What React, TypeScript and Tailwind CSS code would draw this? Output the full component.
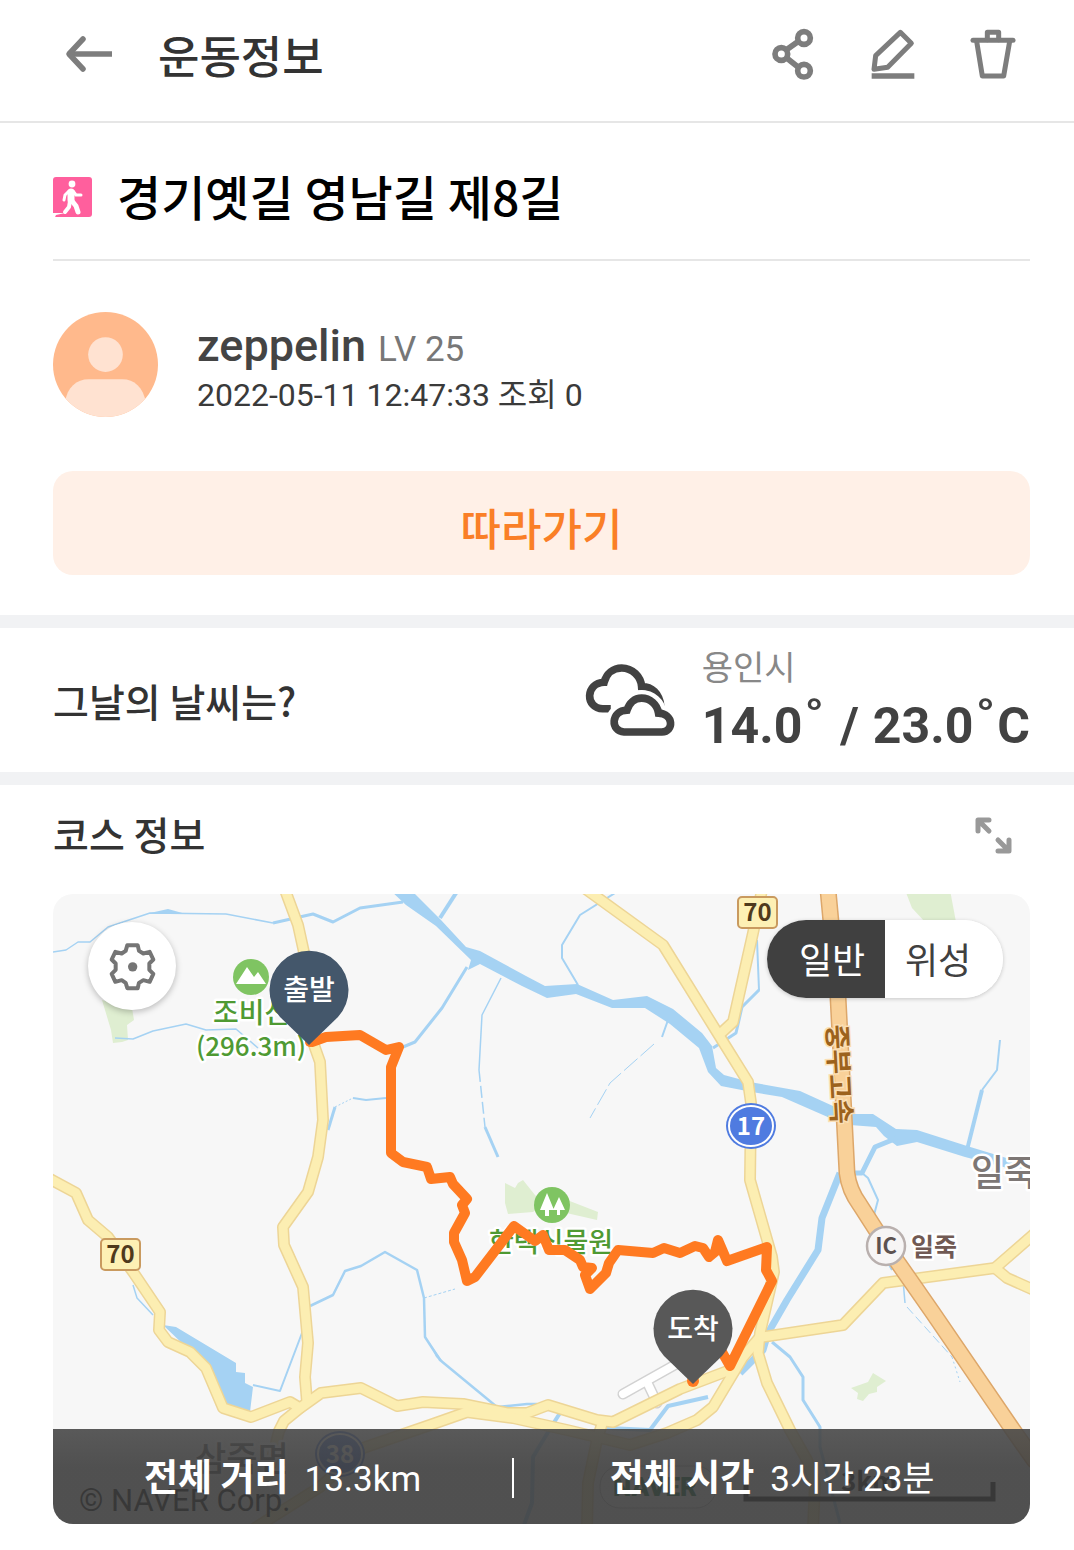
import { useState } from "react";

const YELLOW_ROADS = [
  "M285 890L298 925L305 957L314 1045L320 1062L323 1120L318 1157L308 1192L283 1227L284 1245L303 1287L308 1343L305 1377L307 1402",
  "M50 1179L76 1193L88 1220L108 1237L133 1272L160 1312L159 1330L168 1342L190 1352L206 1368L223 1408L251 1417L290 1402L300 1408",
  "M268 1475L279 1431L284 1421L300 1408L321 1393L361 1388L397 1406L423 1402L463 1404L507 1413L527 1413L548 1405L597 1420L613 1422L680 1389L730 1370",
  "M255 1528L320 1487L363 1448L430 1425L467 1412L513 1418L567 1430L630 1445L667 1433L697 1420L713 1407L743 1357L760 1337",
  "M587 890L663 945L720 1037L748 1082L751 1103L750 1180L772 1257L774 1272L760 1333L758 1353L767 1383L790 1430L807 1460L815 1483L813 1528",
  "M762 890L753 933L733 1022L720 1034",
  "M762 1337L843 1325L883 1283L995 1268L1034 1234",
  "M995 1268L1007 1278L1034 1290",
  "M602 1424L597 1440L588 1483L587 1528",
];

const HIGHWAY = "M828 890L838 997L847 1173Q849 1190 860 1205L887 1247L933 1313L1013 1430L1034 1460";

const STREAMS: { d: string; w: number; dash?: string }[] = [
  { d: "M53 952L66 950L78 942L90 942L108 927L150 913L226 914L273 923", w: 1.5 },
  { d: "M273 923L313 914L333 922L360 908L403 902", w: 3 },
  { d: "M115 1038L133 1039L153 1031L186 1024L206 1030L236 1029L258 1048", w: 1.5 },
  { d: "M328 1130L335 1107", w: 3 },
  { d: "M335 1107L353 1098", w: 1, dash: "2 2" },
  { d: "M353 1098L366 1100L386 1098", w: 2 },
  { d: "M458 890L440 918", w: 4 },
  { d: "M467 967L442 1008L415 1042L403 1047", w: 3 },
  { d: "M501 978L482 1015L479 1070", w: 1.5 },
  { d: "M479 1070L485 1127", w: 1.5, dash: "12 4" },
  { d: "M485 1127L498 1157", w: 3 },
  { d: "M615 893L580 915L562 945L562 958L578 985", w: 2 },
  { d: "M668 1020L662 1037", w: 2 },
  { d: "M654 1044L610 1083L590 1118", w: 1, dash: "18 4" },
  { d: "M757 940L759 990L742 1007", w: 2 },
  { d: "M759 990L742 1007L736 1033L713 1048", w: 3 },
  { d: "M1000 1040L997 1070L982 1090", w: 2 },
  { d: "M982 1090L967 1150", w: 4 },
  { d: "M897 1138L875 1147L862 1173L840 1173", w: 5 },
  { d: "M840 1173L822 1218L818 1250L787 1300L768 1333L763 1350L740 1373", w: 7 },
  { d: "M862 1173L868 1178L878 1200L870 1230L892 1270", w: 2 },
  { d: "M903 1280L905 1303", w: 1.5 },
  { d: "M907 1307L952 1357", w: 1, dash: "9 4" },
  { d: "M952 1357L960 1382", w: 1, dash: "2 3" },
  { d: "M772 1342L790 1357L803 1377L803 1400L820 1427L820 1447L840 1523", w: 3 },
  { d: "M133 1285L137 1298L153 1315", w: 1.5 },
  { d: "M253 1385L280 1391L302 1333", w: 2 },
  { d: "M310 1306L333 1295L345 1271L361 1266L385 1252L417 1270L424 1298L425 1337L440 1360L497 1407L527 1404L537 1404", w: 2.5 },
  { d: "M424 1298L455 1289", w: 1, dash: "3 2" },
  { d: "M560 1413L553 1424L533 1457L532 1503L524 1525", w: 4 },
  { d: "M708 1397L668 1406L650 1430L608 1428L587 1420", w: 4 },
];

const RIVER =
  "M390 890L411 890L441 920L466 947L480 951L526 976L545 986L577 984L613 1000L647 996L673 1009L702 1033L712 1046L716 1068L724 1075L750 1082L800 1091L833 1106L852 1114L873 1114L896 1129L917 1130L967 1146L1030 1165L1030 1174L965 1157L917 1142L897 1146L884 1136L876 1127L850 1125L830 1118L782 1097L752 1092L721 1086L708 1072L699 1048L670 1024L645 1008L612 1008L576 994L547 998L522 986L480 964L468 970L471 960L436 926L406 905Z";

const ROUTE =
  "M312 1042L326 1037L360 1035L386 1050L399 1047L391 1067L391 1153L403 1162L427 1167L431 1179L450 1177L453 1184L467 1199L462 1205L465 1213L454 1233L454 1242L462 1260L467 1281L475 1277L514 1226L535 1241L543 1235L549 1250L565 1250L580 1260L583 1267L592 1268L585 1275L590 1289L606 1273L609 1263L618 1250L653 1253L664 1248L680 1253L695 1246L703 1248L709 1257L715 1252L718 1240L727 1261L767 1247L766 1270L772 1281L730 1366L718 1345";

function RouteShield({ x, y }: { x: number; y: number }) {
  return (
    <g>
      <rect x={x} y={y} width="39" height="31" rx="4" fill="#fdf0b4" stroke="#c99a5f" strokeWidth="2" />
      <text x={x + 19.5} y={y + 24} textAnchor="middle" fontSize="24" fontWeight="700" fill="#4f3a1c">70</text>
    </g>
  );
}

function RoundShield({ x, y, label }: { x: number; y: number; label: string }) {
  return (
    <g>
      <ellipse cx={x} cy={y} rx="25" ry="23" fill="#4f7be0" />
      <ellipse cx={x} cy={y} rx="22" ry="20" fill="none" stroke="#fff" strokeWidth="2" />
      <text x={x} y={y + 9} textAnchor="middle" fontSize="24" fontWeight="700" fill="#fff">{label}</text>
    </g>
  );
}

function Pin({ x, y, color, label }: { x: number; y: number; color: string; label: string }) {
  return (
    <g transform={`translate(${x} ${y})`}>
      <path d="M0 55L-29 27A39.5 39.5 0 1 1 29 27Z" fill={color} />
      <text y="10" textAnchor="middle" fontSize="28" fontWeight="500" fill="#fff">{label}</text>
    </g>
  );
}

function CourseMap() {
  return (
    <svg
      viewBox="53 894 977 630"
      preserveAspectRatio="xMidYMid slice"
      className="block aspect-[977/630] w-full bg-[#f7f7f7] font-['Noto_Sans_CJK_KR',sans-serif]"
      role="img"
      aria-label="코스 지도"
    >
      <g fill="#dfeed1">
        <path d="M102 1000L132 1008L134 1020L127 1025L128 1040L122 1042L113 1043L111 1030Z" />
        <path d="M505 1183L515 1188L518 1183L523 1180L535 1195L545 1204L533 1212L508 1214L505 1203Z" />
        <path d="M562 1198L598 1212L597 1220L562 1212Z" />
        <path d="M905 890H950L956 922H925L912 908Z" />
        <path d="M851 1388L868 1382L873 1373L886 1381L877 1387L877 1392L869 1394L863 1401L857 1399L858 1393Z" />
      </g>
      <g fill="#a5d2f3">
        <path d={RIVER} />
        <path d="M163 1325L176 1327L236 1363L236 1372L245 1373L245 1383L253 1387L250 1412H226L206 1367L186 1347Z" />
        <path d="M150 913L168 909L186 914Z" />
        <path d="M429 1342L444 1363L436 1357Z" />
      </g>
      <g fill="none" stroke="#a5d2f3" strokeLinejoin="round">
        {STREAMS.map((s) => (
          <path key={s.d} d={s.d} strokeWidth={s.w} strokeDasharray={s.dash} />
        ))}
      </g>
      <g fill="none" strokeLinecap="round" strokeLinejoin="round">
        <path d="M623 1394L680 1362M647 1382L657 1403" stroke="#d2d2d2" strokeWidth="11" />
        <path d="M623 1394L680 1362M647 1382L657 1403" stroke="#fff" strokeWidth="8" />
        {YELLOW_ROADS.map((d) => (
          <path key={d} d={d} stroke="#edd596" strokeWidth="12" />
        ))}
        {YELLOW_ROADS.map((d) => (
          <path key={d} d={d} stroke="#fceeb2" strokeWidth="9" />
        ))}
        <path d={HIGHWAY} stroke="#dda76a" strokeWidth="17" />
        <path d={HIGHWAY} stroke="#f9d199" strokeWidth="14" />
      </g>

      <RouteShield x={738} y={897} />
      <RouteShield x={101} y={1239} />
      <RoundShield x={751} y={1126} label="17" />
      <RoundShield x={340} y={1454} label="38" />

      <circle cx="886" cy="1246" r="19" fill="#f7f5f5" stroke="#b9b0ae" strokeWidth="2.5" />
      <text x="886" y="1254" textAnchor="middle" fontSize="22" fontWeight="700" fill="#5d5250">IC</text>

      <g stroke="#fff" strokeWidth="5" strokeLinejoin="round" className="[paint-order:stroke]">
        <text x="911" y="1256" fontSize="25" fontWeight="700" fill="#715a54">일죽</text>
        <text x="971" y="1186" fontSize="36" fontWeight="500" fill="#7d7775">일죽</text>
        <text x="213" y="1023" fontSize="28" fontWeight="500" fill="#4f9a33">조비산</text>
        <text x="251" y="1056" textAnchor="middle" fontSize="26" fontWeight="500" fill="#4f9a33">(296.3m)</text>
        <text x="551" y="1252" textAnchor="middle" fontSize="27" fontWeight="500" fill="#4f9a33">한택식물원</text>
        <text x="195" y="1471" fontSize="34" fontWeight="500" fill="#555">삼죽면</text>
      </g>
      <text
        transform="translate(827 1025) rotate(87)"
        fontSize="27"
        fontWeight="700"
        fill="#9c621c"
        stroke="#fbdfb4"
        strokeWidth="3"
        className="[paint-order:stroke]"
      >
        중부고속
      </text>

      <circle cx="251" cy="977" r="18" fill="#7fc462" />
      <path d="M236 984L247 967L254 977L258 972L266 984Z" fill="#fff" />
      <circle cx="552" cy="1205" r="18" fill="#7fc462" />
      <path d="M547 1193L554 1210H549V1216H545V1210H540ZM559 1197L565 1210H560V1215H557V1210H553Z" fill="#fff" />

      <path d={ROUTE} fill="none" stroke="#ff7a21" strokeWidth="10" strokeLinecap="round" strokeLinejoin="round" />
      <circle cx="310" cy="1042" r="5" fill="#ff7a21" />
      <circle cx="693" cy="1381" r="6" fill="#ff7a21" />
      <Pin x={309} y={990} color="#44576b" label="출발" />
      <Pin x={693} y={1329} color="#585858" label="도착" />

      <text x="79" y="1511" fontSize="31" fill="#000" className="font-[Roboto,sans-serif]">© NAVER Corp.</text>
      <rect x="600" y="1466" width="116" height="42" rx="20" fill="#fff" stroke="#bbb" />
      <text x="613" y="1496" fontSize="26" fontWeight="900" fill="#00632d" className="font-[Roboto,sans-serif]">NAVER</text>
      <path d="M746 1482V1499H993V1482" fill="none" stroke="#000" strokeWidth="5" />
      <text x="869" y="1491" textAnchor="middle" fontSize="26" fontWeight="700" fill="#000">3km</text>
    </svg>
  );
}

const iconButton = "block cursor-pointer";

export default function App() {
  const [layer, setLayer] = useState("일반");

  return (
    <div className="min-h-screen bg-white pb-6 font-['Noto_Sans_CJK_KR',sans-serif] text-[#333]">
      <header className="flex items-center border-b-2 border-[#e6e6e6] pt-[25px] pr-14 pb-9 pl-16">
        <button type="button" aria-label="뒤로" className={iconButton}>
          <svg viewBox="0 0 50 40" className="h-10 w-[50px]" fill="none" stroke="#7d7d7d" strokeWidth="5.5" strokeLinejoin="round">
            <path d="M48 19H5" />
            <path d="M19 4L5 19L19 34" strokeLinecap="round" />
          </svg>
        </button>
        <h1 className="ml-11 text-[45px] leading-[60px] font-medium">운동정보</h1>
        <div className="ml-auto flex gap-[50px]">
          <button type="button" aria-label="공유" className={iconButton}>
            <svg viewBox="85 75 150 180" className="h-[60px] w-[50px]" fill="none" stroke="#7d7d7d" strokeWidth="17">
              <circle cx="193" cy="114" r="19" />
              <circle cx="125" cy="162" r="19" />
              <circle cx="193" cy="212" r="19" />
              <path d="M141 149L176 124M141 174L176 202" />
            </svg>
          </button>
          <button type="button" aria-label="수정" className={iconButton}>
            <svg viewBox="385 75 150 180" className="h-[60px] w-[50px]" fill="none" stroke="#7d7d7d" strokeWidth="15" strokeLinejoin="round">
              <path d="M482 97L515 130L444 202L403 208L408 167Z" />
              <path d="M396 228H524" strokeWidth="17" />
            </svg>
          </button>
          <button type="button" aria-label="삭제" className={iconButton}>
            <svg viewBox="685 75 150 180" className="h-[60px] w-[50px]" fill="none" stroke="#7d7d7d" strokeWidth="15" strokeLinecap="round" strokeLinejoin="round">
              <path d="M700 121H820" />
              <path d="M711 124L728 228H792L810 124" />
              <path d="M743 119V97H777V119" />
            </svg>
          </button>
        </div>
      </header>

      <main>
        <section className="pr-11 pl-[53px]">
          <div className="flex items-center gap-6 border-b-2 border-[#e6e6e6] pt-10 pb-7">
            <svg viewBox="0 0 40 40" className="size-10" aria-label="걷기" role="img">
              <rect width="39" height="40" rx="3" fill="#ff5f9d" />
              <g fill="none" stroke="#fff" strokeLinecap="round" strokeLinejoin="round">
                <path d="M18 15L18 23" strokeWidth="7" />
                <path d="M16 14L12 18L11 23" strokeWidth="3" />
                <path d="M20 14L23 18L28 18" strokeWidth="3" />
                <path d="M17 24L16 30L12 35" strokeWidth="4" />
                <path d="M19 24L23 29L25 35" strokeWidth="5" />
              </g>
              <path d="M0 36H12L3 38L2 40H0Z" fill="#fff" />
              <circle cx="19" cy="7" r="3.4" fill="#fff" />
            </svg>
            <h2 className="pb-1 text-[48px] leading-[64px] font-medium text-black">경기옛길 영남길 제8길</h2>
          </div>

          <div className="flex items-center gap-[39px] pt-[51px]">
            <svg viewBox="0 0 106 106" className="size-[105px]" aria-hidden="true">
              <defs>
                <clipPath id="avatar">
                  <circle cx="53" cy="53" r="53" />
                </clipPath>
              </defs>
              <g clipPath="url(#avatar)">
                <rect width="106" height="106" fill="#ffb98c" />
                <circle cx="53" cy="43" r="17.5" fill="#ffe2d1" />
                <path d="M12 106V92C14 76 24 68 36 68H70C82 68 91 76 94 92V106Z" fill="#ffe2d1" />
              </g>
            </svg>
            <div className="pt-2">
              <p className="flex items-baseline gap-3 font-[Roboto,sans-serif] leading-[48px]">
                <span className="text-[45px] font-medium text-[#444]">zeppelin</span>
                <span className="text-[35px] text-[#777]">LV 25</span>
              </p>
              <p className="font-[Roboto,'Noto_Sans_CJK_KR',sans-serif] text-[32px] leading-[42px] text-[#3a3a3a]">2022-05-11 12:47:33 조회 0</p>
            </div>
          </div>

          <button type="button" className="mt-[54px] mb-10 block w-full cursor-pointer rounded-[20px] bg-[#fff0e7] pt-[22px] pb-[14px] text-[44px] leading-[68px] font-medium text-[#fa7f27]">
            따라가기
          </button>
        </section>

        <section className="flex items-center border-y-[13px] border-[#f1f2f4] py-4 pr-11 pl-[53px]">
          <h3 className="text-[39px] leading-[56px] font-medium">그날의 날씨는?</h3>
          <svg viewBox="70 130 276 223" className="ml-auto h-[74px] w-[92px]" fill="none" stroke="#424242" strokeWidth="23" aria-label="구름 많음" role="img">
            <path d="M150 268H126C72 266 73 190 130 188C137 162 157 145 183 145C215 145 241 171 243 201C272 200 298 222 301 262" />
            <path d="M190 338C149 336 149 274 199 272C206 250 222 236 243 236C268 236 290 255 294 281C340 283 341 337 304 338Z" stroke="#fff" strokeWidth="50" fill="#fff" />
            <path d="M190 338C149 336 149 274 199 272C206 250 222 236 243 236C268 236 290 255 294 281C340 283 341 337 304 338Z" />
          </svg>
          <div className="ml-[26px]">
            <p className="text-[34px] leading-[44px] text-[#888]">용인시</p>
            <p className="flex items-baseline pt-2 font-[Roboto,sans-serif] text-[50px] leading-[60px] font-bold text-[#424242]">
              14.0<span className="mx-0.5 text-[60px] leading-[48px]">˚</span>
              <span className="mx-[14px]">/</span>
              23.0<span className="mx-0.5 text-[60px] leading-[48px]">˚</span>C
            </p>
          </div>
        </section>

        <section className="pr-11 pl-[53px]">
          <div className="flex items-center justify-between pt-5 pr-[17px] pb-[29px]">
            <h3 className="pb-1 text-[39px] leading-[56px] font-medium">코스 정보</h3>
            <button type="button" aria-label="크게 보기" className={iconButton}>
              <svg viewBox="0 0 40 40" className="size-10" fill="none" stroke="#999" strokeWidth="5" strokeLinecap="round" strokeLinejoin="round">
                <path d="M5 16V5H16M6 6L16 16" />
                <path d="M36 25V36H25M35 35L25 25" />
              </svg>
            </button>
          </div>

          <div className="relative overflow-hidden rounded-[20px]">
            <CourseMap />
            <button type="button" aria-label="지도 설정" className="absolute top-7 left-[35px] flex size-[88px] cursor-pointer items-center justify-center rounded-full bg-white shadow-[0_2px_6px_rgba(0,0,0,0.25)]">
              <svg viewBox="165 155 141 146" className="h-[49px] w-[47px]" fill="none" stroke="#757575" strokeWidth="12" strokeLinejoin="round">
                <path d="M220 164H251L255 181L268 189L287 184L298 207L286 219V238L298 250L287 274L268 269L255 277L251 293H220L215 277L203 269L184 274L173 250L185 238V219L173 207L184 184L203 189L215 181Z" />
                <circle cx="236" cy="229" r="14" fill="#757575" stroke="none" />
              </svg>
            </button>
            <div className="absolute top-[26px] right-[27px] flex overflow-hidden rounded-full bg-white shadow-[0_1px_4px_rgba(0,0,0,0.2)]">
              {["일반", "위성"].map((name) => (
                <button
                  key={name}
                  type="button"
                  aria-pressed={layer === name}
                  onClick={() => setLayer(name)}
                  className={
                    "w-[118px] cursor-pointer pt-[10px] pb-3 text-[36px] leading-[56px] first:pl-3 last:pr-3 " +
                    (layer === name ? "bg-[#404040] text-white" : "bg-white text-[#404040]")
                  }
                >
                  {name}
                </button>
              ))}
            </div>
            <dl className="absolute inset-x-0 bottom-0 flex items-center bg-linear-to-b from-[#484848e6] to-[#3e3e3ee6] to-40% pt-4 pb-[14px] text-[37px] leading-[60px] text-white">
              <div className="flex w-[47%] items-baseline justify-center gap-4">
                <dt className="font-bold">전체 거리</dt>
                <dd className="font-[Roboto,'Noto_Sans_CJK_KR',sans-serif] text-[35px]">13.3km</dd>
              </div>
              <div className="h-10 w-0.5 bg-white" />
              <div className="flex flex-1 items-baseline justify-center gap-4">
                <dt className="font-bold">전체 시간</dt>
                <dd className="font-[Roboto,'Noto_Sans_CJK_KR',sans-serif] text-[35px]">3시간 23분</dd>
              </div>
            </dl>
          </div>
        </section>
      </main>
    </div>
  );
}
